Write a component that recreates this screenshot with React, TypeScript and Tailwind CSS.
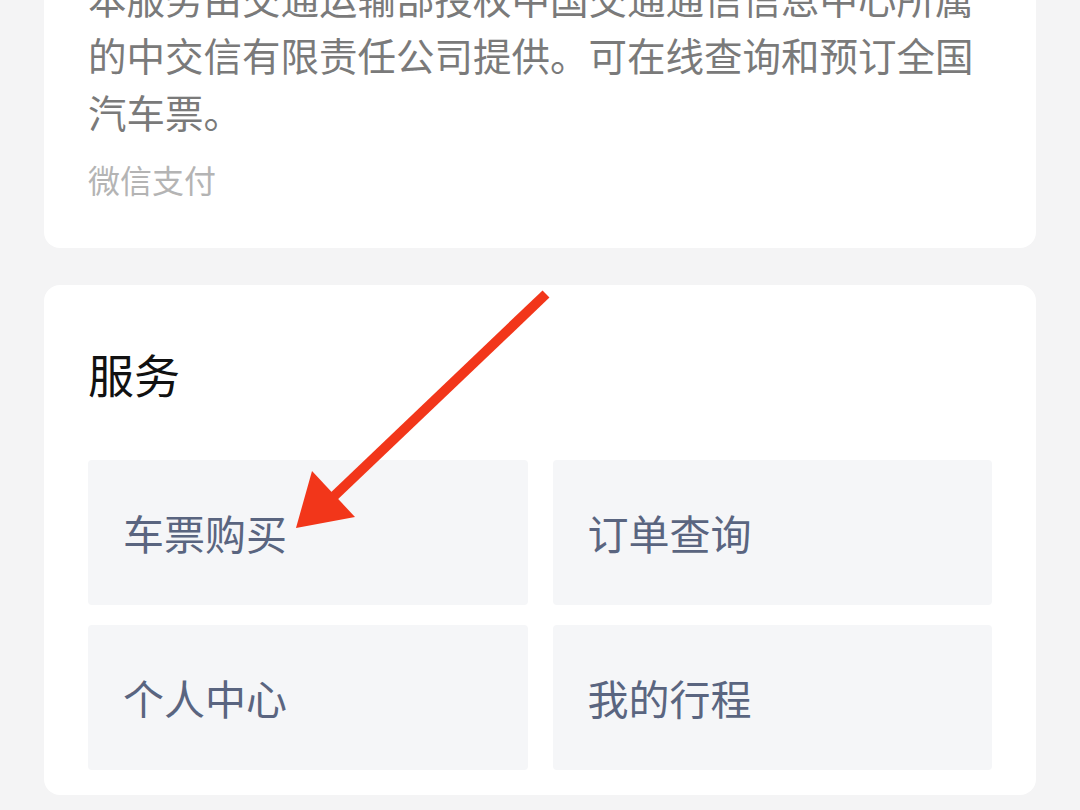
const services = ["车票购买", "订单查询", "个人中心", "我的行程"];

function Arrow() {
  return (
    <svg
      className="absolute left-0 top-0 pointer-events-none"
      width="1080"
      height="810"
      viewBox="0 0 1080 810"
    >
      <line x1="546" y1="294" x2="330" y2="500" stroke="#f2361a" strokeWidth="10" strokeLinecap="butt" />
      <polygon points="296,528 312,471 355,517" fill="#f2361a" />
    </svg>
  );
}

export default function App() {
  return (
    <div
      className="relative w-[1080px] h-[810px] overflow-hidden bg-[#f4f4f5] px-[44px]"
      style={{ fontFamily: '"Noto Sans CJK SC", "Noto Sans", sans-serif' }}
    >
      <div className="-mt-[31px] rounded-b-2xl bg-white px-[44px] pb-[49px]">
        <p className="text-[38.5px] leading-[57px] text-[#7a7a7a]">
          本服务由交通运输部授权中国交通通信信息中心所属的中交信有限责任公司提供。可在线查询和预订全国汽车票。
        </p>
        <p className="mt-[19px] text-[32px] leading-[40px] text-[#b4b4b4]">微信支付</p>
      </div>

      <div className="mt-[37px] rounded-2xl bg-white px-[44px] pt-[65px] pb-[25px]">
        <h2 className="text-[46px] leading-[46px] font-normal text-[#111]">服务</h2>
        <div className="mt-[64px] grid grid-cols-2 gap-x-[25px] gap-y-[20px]">
          {services.map((s) => (
            <div
              key={s}
              className="flex h-[145px] items-center rounded-[4px] bg-[#f5f6f8] pl-[35px] text-[41px] text-[#5a6580]"
            >
              {s}
            </div>
          ))}
        </div>
      </div>

      <Arrow />
    </div>
  );
}
